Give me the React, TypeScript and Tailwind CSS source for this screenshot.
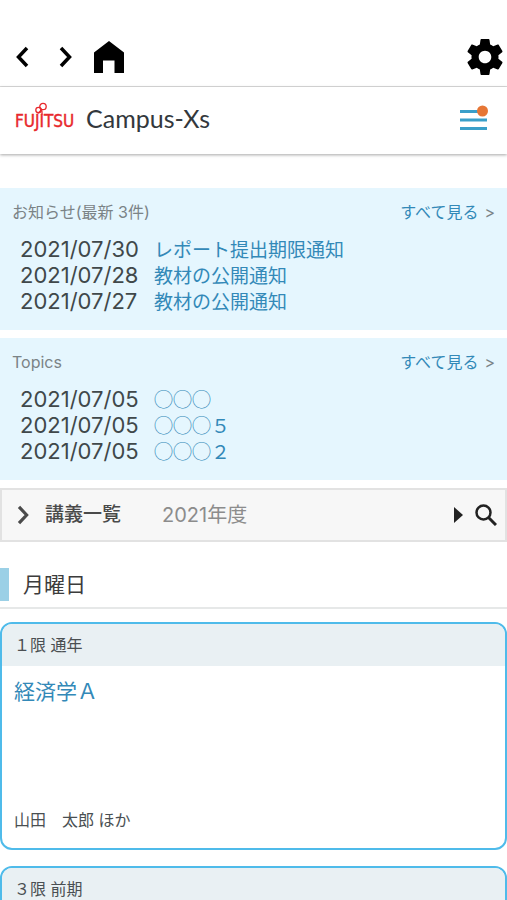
import React from 'react';

interface NoticeItem {
  date: string;
  title: string;
}

interface Lecture {
  period: string;
  name: string;
  teacher: string;
}

const notices: NoticeItem[] = [
  { date: '2021/07/30', title: 'レポート提出期限通知' },
  { date: '2021/07/28', title: '教材の公開通知' },
  { date: '2021/07/27', title: '教材の公開通知' },
];

const topics: NoticeItem[] = [
  { date: '2021/07/05', title: '◯◯◯' },
  { date: '2021/07/05', title: '◯◯◯５' },
  { date: '2021/07/05', title: '◯◯◯２' },
];

const lectures: Lecture[] = [
  { period: '１限 通年', name: '経済学Ａ', teacher: '山田　太郎 ほか' },
  { period: '３限 前期', name: '', teacher: '' },
];

const Chevron: React.FC<{ direction: 'left' | 'right'; className: string }> = ({ direction, className }) => (
  <svg viewBox="0 0 12 20" className={className} fill="none" stroke="currentColor" strokeWidth="3.500">
    <path d={direction === 'left' ? 'M11 1 2.500 10l8.500 9' : 'M1 1l8.500 9L1 19'} />
  </svg>
);

const HomeIcon = () => (
  <svg viewBox="0 0 30 32" className="h-8 w-[30px]" fill="currentColor">
    <path d="M15 0 30 11.500V32h-9.500V19.500H9V32H0V11.500z" />
  </svg>
);

const GearIcon = () => (
  <svg viewBox="2 2 20 20" className="size-9" fill="currentColor">
    <path d="M19.43 12.98c.04-.32.07-.64.07-.98s-.03-.66-.07-.98l2.11-1.65c.19-.15.24-.42.12-.64l-2-3.46c-.12-.22-.39-.3-.61-.22l-2.49 1c-.52-.4-1.08-.73-1.69-.98l-.38-2.65C14.46 2.18 14.25 2 14 2h-4c-.25 0-.46.18-.49.42l-.38 2.65c-.61.25-1.17.59-1.69.98l-2.49-1c-.23-.09-.49 0-.61.22l-2 3.46c-.13.22-.07.49.12.64l2.11 1.65c-.04.32-.07.65-.07.98s.03.66.07.98l-2.11 1.65c-.19.15-.24.42-.12.64l2 3.46c.12.22.39.3.61.22l2.49-1c.52.4 1.08.73 1.69.98l.38 2.65c.03.24.24.42.49.42h4c.25 0 .46-.18.49-.42l.38-2.65c.61-.25 1.17-.59 1.69-.98l2.49 1c.23.09.49 0 .61-.22l2-3.46c.12-.22.07-.49-.12-.64l-2.11-1.65zM12 15.5c-1.93 0-3.5-1.57-3.5-3.5s1.57-3.5 3.5-3.5 3.5 1.57 3.5 3.5-1.57 3.5-3.5 3.5z" />
  </svg>
);

const FujitsuLogo = () => (
  <svg viewBox="0 0 62 36" className="h-9 w-[62px]" role="img" aria-label="FUJITSU">
    <text x="0" y="26" fill="#e8282c" stroke="#e8282c" strokeWidth="0.400" fontFamily="'DejaVu Sans Condensed', 'DejaVu Sans', sans-serif" fontSize="17">
      FUJITSU
    </text>
    <g fill="none" stroke="#e8282c" strokeWidth="1.300">
      <circle cx="28" cy="5.500" r="3.200" />
      <circle cx="23.500" cy="9" r="2.700" />
      <path d="M26 8.500c0 2-2 2-3 4M25.500 7.500c2 1 1.500 4 1.500 6" />
    </g>
  </svg>
);

const MenuIcon = () => (
  <svg viewBox="0 0 29 32" className="h-8 w-[29px]">
    <path d="M0 8.500h27M0 17h27M0 25.500h27" stroke="#3a9fc9" strokeWidth="3" />
    <circle cx="22.500" cy="8" r="5.500" fill="#e67635" />
  </svg>
);

const SearchIcon = () => (
  <svg viewBox="0 0 22 22" className="size-[22px]" fill="none" stroke="currentColor">
    <circle cx="8.500" cy="8.500" r="7" strokeWidth="2.500" />
    <path d="m13.500 13.500 7.500 7.500" strokeWidth="3" />
  </svg>
);

const NoticePanel: React.FC<{ title: string; items: NoticeItem[] }> = ({ title, items }) => (
  <section className="bg-[#e5f6fe] px-3 pt-3 pb-4">
    <div className="flex items-center justify-between text-base text-[#7b8386]">
      <h2>{title}</h2>
      <div className="flex gap-1.5">
        <a href="#" className="text-[#3389b8]">すべて見る</a>
        <span>&gt;</span>
      </div>
    </div>
    <ul className="mt-3 pl-2">
      {items.map((item, i) => (
        <li key={i} className="flex h-[26px] items-center">
          <span className="w-[134px] shrink-0 text-[22px] text-[#40484a]">{item.date}</span>
          <a href="#" className="font-['Noto_Sans_CJK_JP',sans-serif] text-[19px] text-[#3389b8]">{item.title}</a>
        </li>
      ))}
    </ul>
  </section>
);

const LectureCard: React.FC<{ lecture: Lecture }> = ({ lecture }) => (
  <article className="flex min-h-[228px] flex-col overflow-hidden rounded-xl border-2 border-[#4fbbea] bg-white">
    <div className="bg-[#e9f0f3] px-3 py-[9px] text-base text-[#4a4f52]">{lecture.period}</div>
    <div className="flex flex-1 flex-col justify-between px-3 pt-[10px] pb-4">
      <a href="#" className="text-[21px] text-[#3389b8]">{lecture.name}</a>
      <p className="text-base text-[#4a4f52]">{lecture.teacher}</p>
    </div>
  </article>
);

const App: React.FC = () => {
  return (
    <div lang="ja" className="h-screen overflow-hidden bg-white font-[Inter,'Noto_Sans_CJK_JP',sans-serif]">
      <nav className="flex items-center border-b border-[#dcdcdc] pt-7 pr-1 pl-4 text-black">
        <div className="flex h-[58px] flex-1 items-center">
          <button aria-label="戻る"><Chevron direction="left" className="h-5 w-3 overflow-visible" /></button>
          <button aria-label="進む" className="ml-8"><Chevron direction="right" className="h-5 w-3 overflow-visible" /></button>
          <button aria-label="ホーム" className="ml-[22px]"><HomeIcon /></button>
        </div>
        <button aria-label="設定"><GearIcon /></button>
      </nav>

      <header className="flex h-[67px] items-center justify-between pr-[18px] pb-1 pl-[15px] shadow-[0_1px_3px_rgba(0,0,0,0.35)]">
        <a href="#" className="flex items-center gap-[9px]">
          <FujitsuLogo />
          <span className="font-[Lato,sans-serif] text-[25px] text-[#33383c]">Campus-Xs</span>
        </a>
        <button aria-label="メニュー"><MenuIcon /></button>
      </header>

      <main className="pt-[34px]">
        <div className="flex flex-col gap-2">
          <NoticePanel title="お知らせ(最新 3件)" items={notices} />
          <NoticePanel title="Topics" items={topics} />

          <div className="flex h-[54px] items-center border-2 border-[#e2e2e2] bg-[#f7f7f7] pr-2 pl-4 text-[19px]">
            <button className="flex items-center gap-4 font-medium text-[#4a4a4a]">
              <Chevron direction="right" className="h-[18px] w-[11px] overflow-visible" />
              講義一覧
            </button>
            <span className="ml-[41px] text-xl text-[#8c8c8c]">2021年度</span>
            <button aria-label="検索" className="ml-auto flex items-center gap-3 text-[#222222]">
              <svg viewBox="0 0 9 16" className="h-4 w-[9px]" fill="currentColor">
                <path d="M0 0l9 8-9 8z" />
              </svg>
              <SearchIcon />
            </button>
          </div>
        </div>

        <div className="mt-[26px] border-b-2 border-[#e6e8e8] pb-[6px]">
          <h2 className="flex h-[33px] items-center border-l-[9px] border-[#9bd0e6] pl-[14px] text-[21px] text-[#3c3c3c]">月曜日</h2>
        </div>

        <div className="mt-[13px] flex flex-col gap-4">
          {lectures.map((lecture) => (
            <LectureCard key={lecture.period} lecture={lecture} />
          ))}
        </div>
      </main>
    </div>
  );
};

export default App;
